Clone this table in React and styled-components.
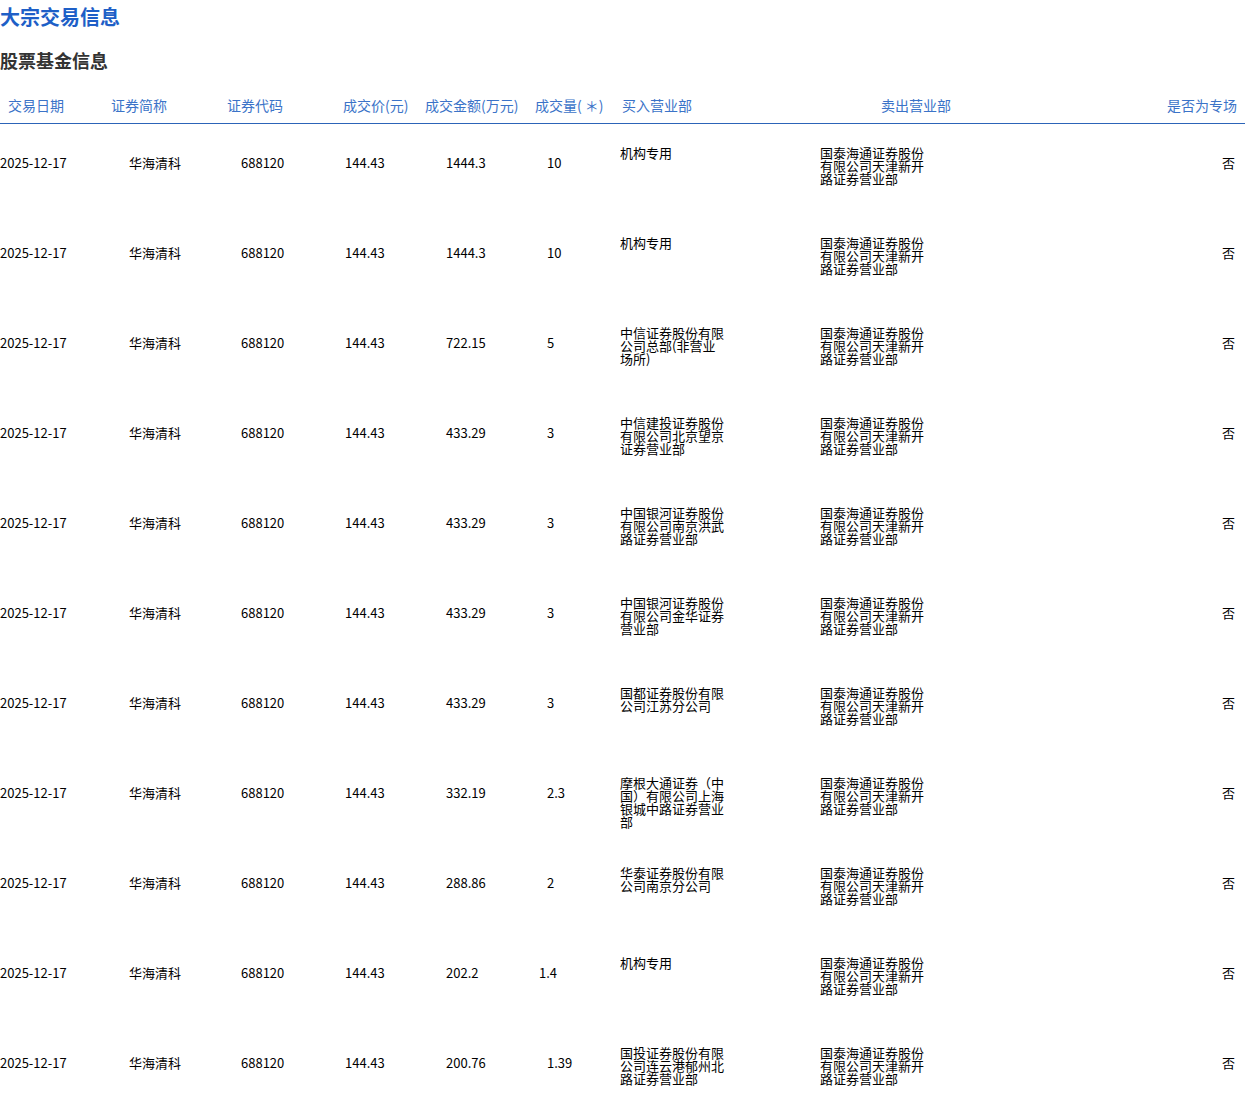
import React from "react"
import styled, { createGlobalStyle } from "styled-components"

const GlobalStyle = createGlobalStyle`
  body {
    margin: 0;
    background: #fff;
    font-family: "Noto Sans CJK SC", "Noto Sans", sans-serif;
    color: #000;
  }
`

const columns = "100px 115px 115px 85px 110px 87px 198px 210px 1fr"

const headers = [
  { label: "交易日期", pad: 8 },
  { label: "证券简称", pad: 11 },
  { label: "证券代码", pad: 12 },
  { label: "成交价(元)", pad: 13 },
  { label: "成交金额(万元)", pad: 10 },
  { label: "成交量( ＊)", pad: 10 },
  { label: "买入营业部", pad: 10 },
  { label: "卖出营业部", pad: 71 },
  { label: "是否为专场", pad: 8, right: true },
]

const seller = "国泰海通证券股份有限公司天津新开路证券营业部"

const rows = [
  { amount: "1444.3", qty: "10", buyer: "机构专用" },
  { amount: "1444.3", qty: "10", buyer: "机构专用" },
  { amount: "722.15", qty: "5", buyer: "中信证券股份有限公司总部(非营业场所)" },
  { amount: "433.29", qty: "3", buyer: "中信建投证券股份有限公司北京望京证券营业部" },
  { amount: "433.29", qty: "3", buyer: "中国银河证券股份有限公司南京洪武路证券营业部" },
  { amount: "433.29", qty: "3", buyer: "中国银河证券股份有限公司金华证券营业部" },
  { amount: "433.29", qty: "3", buyer: "国都证券股份有限公司江苏分公司" },
  { amount: "332.19", qty: "2.3", buyer: "摩根大通证券（中国）有限公司上海银城中路证券营业部" },
  { amount: "288.86", qty: "2", buyer: "华泰证券股份有限公司南京分公司" },
  { amount: "202.2", qty: "1.4", buyer: "机构专用", nudge: -8 },
  { amount: "200.76", qty: "1.39", buyer: "国投证券股份有限公司连云港郁州北路证券营业部" },
]

const App = () => (
  <Page>
    <GlobalStyle />
    <Title>大宗交易信息</Title>
    <SubTitle>股票基金信息</SubTitle>
    <Table>
      <HeadRow>
        {headers.map((h) => (
          <HeadCell key={h.label} $pad={h.pad} $right={h.right}>
            {h.label}
          </HeadCell>
        ))}
      </HeadRow>
      {rows.map((r, i) => (
        <Row key={i}>
          <Cell $pad={0}>2025-12-17</Cell>
          <Cell $pad={29}>华海清科</Cell>
          <Cell $pad={26}>688120</Cell>
          <Cell $pad={15}>144.43</Cell>
          <Cell $pad={31}>{r.amount}</Cell>
          <Cell $pad={22 + (r.nudge || 0)}>{r.qty}</Cell>
          <BranchCell $pad={8}>
            <Branch>{r.buyer}</Branch>
          </BranchCell>
          <BranchCell $pad={10}>
            <Branch>{seller}</Branch>
          </BranchCell>
          <Cell $pad={10} $right>
            否
          </Cell>
        </Row>
      ))}
    </Table>
  </Page>
)

export default App

const Page = styled.div`
  width: 1245px;
  height: 1114px;
  overflow: hidden;
`

const Title = styled.h2`
  margin: 0;
  font-size: 20px;
  line-height: 34px;
  font-weight: 700;
  color: #1e5fc7;
`

const SubTitle = styled.h3`
  margin: 13px 0 0;
  font-size: 18px;
  line-height: 26px;
  font-weight: 700;
  color: #333;
`

const Table = styled.div`
  display: flex;
  flex-direction: column;
`

const HeadRow = styled.div`
  display: grid;
  grid-template-columns: ${columns};
  padding: 22px 0 8px;
  border-bottom: 1px solid #2c64b8;
`

const HeadCell = styled.div`
  font-size: 14px;
  line-height: 20px;
  color: #3b73c8;
  white-space: nowrap;
  text-align: ${(p) => (p.$right ? "right" : "left")};
  padding-left: ${(p) => (p.$right ? 0 : p.$pad)}px;
  padding-right: ${(p) => (p.$right ? p.$pad : 0)}px;
`

const Row = styled.div`
  display: grid;
  grid-template-columns: ${columns};
  align-items: center;
  height: 90px;
  padding-bottom: 12px;
  box-sizing: border-box;
`

const Cell = styled.div`
  font-size: 13px;
  line-height: 18px;
  white-space: nowrap;
  text-align: ${(p) => (p.$right ? "right" : "left")};
  padding-left: ${(p) => (p.$right ? 0 : p.$pad)}px;
  padding-right: ${(p) => (p.$right ? p.$pad : 0)}px;
`

const BranchCell = styled.div`
  height: 34px;
  padding-left: ${(p) => p.$pad}px;
  overflow: visible;
`

const Branch = styled.div`
  width: 105px;
  font-size: 13px;
  line-height: 13px;
  word-break: break-all;
`
